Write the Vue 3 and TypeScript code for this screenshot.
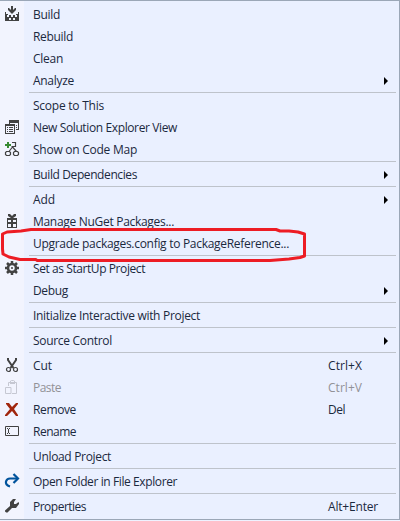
<script setup lang="ts">
import type { Directive } from 'vue'

interface Item {
  label: string
  width: number
  icon?: string
  shortcut?: string
  shortcutWidth?: number
  submenu?: boolean
  disabled?: boolean
}

const groups: Item[][] = [
  [
    { label: 'Build', width: 27, icon: 'build' },
    { label: 'Rebuild', width: 40 },
    { label: 'Clean', width: 30 },
    { label: 'Analyze', width: 41, submenu: true },
  ],
  [
    { label: 'Scope to This', width: 71 },
    { label: 'New Solution Explorer View', width: 144, icon: 'view' },
    { label: 'Show on Code Map', width: 104, icon: 'map' },
  ],
  [{ label: 'Build Dependencies', width: 104, submenu: true }],
  [
    { label: 'Add', width: 22, submenu: true },
    { label: 'Manage NuGet Packages...', width: 141, icon: 'gift' },
    { label: 'Upgrade packages.config to PackageReference...', width: 256 },
  ],
  [
    { label: 'Set as StartUp Project', width: 112, icon: 'gear' },
    { label: 'Debug', width: 35, submenu: true },
  ],
  [{ label: 'Initialize Interactive with Project', width: 167 }],
  [{ label: 'Source Control', width: 79, submenu: true }],
  [
    { label: 'Cut', width: 19, icon: 'cut', shortcut: 'Ctrl+X', shortcutWidth: 34 },
    { label: 'Paste', width: 28, icon: 'paste', shortcut: 'Ctrl+V', shortcutWidth: 34, disabled: true },
    { label: 'Remove', width: 43, icon: 'remove', shortcut: 'Del', shortcutWidth: 17 },
    { label: 'Rename', width: 43, icon: 'rename' },
  ],
  [{ label: 'Unload Project', width: 78 }],
  [{ label: 'Open Folder in File Explorer', width: 144, icon: 'open' }],
  [{ label: 'Properties', width: 53, icon: 'wrench', shortcut: 'Alt+Enter', shortcutWidth: 50 }],
]

const vFit: Directive<HTMLElement, number> = {
  mounted(el, { value }) {
    const natural = el.getBoundingClientRect().width
    const count = el.textContent?.length ?? 1
    el.style.letterSpacing = `${(value - natural) / count}px`
  },
}
</script>

<template>
  <div class="menu" role="menu">
    <div v-for="(group, g) in groups" :key="g" class="group">
      <div v-for="item in group" :key="item.label" class="item" :class="{ disabled: item.disabled }" role="menuitem">
        <span class="icon">
          <svg v-if="item.icon" width="15" height="15" viewBox="0 0 15 15">
            <g v-if="item.icon === 'build'" fill="#424242">
              <path d="M6 -1h2v4l2-2h1v2L7 7 3 3V1h1l2 2z" />
              <path d="M0 5h1v2h2v1h8V7h2V5h1v9H0z" />
              <path d="M2 8h2v2H2zM6 8h2v2H6zM10 8h2v2h-2zM4 11h2v2H4zM8 11h2v2H8z" fill="#f2f4fe" />
            </g>
            <g v-else-if="item.icon === 'view'" fill="#424242">
              <path d="M4 0h10v10h-3V9h2V3H5v1H4z" />
              <path fill-rule="evenodd" d="M0 4h10v10H0zM1 6v7h8V6z" />
              <path d="M2 7h1v1H2zM4 7h4v1H4zM2 9h1v1H2zM4 9h4v1H4zM2 11h1v1H2zM4 11h4v1H4zM11 5h1v1h-1zM11 7h1v1h-1z" />
            </g>
            <g v-else-if="item.icon === 'map'" fill="none" stroke="#424242" stroke-width="1.200">
              <path d="M7 .5h3.500v4H6.500M7.500 5 4 9.500M7.500 5l4 4.500M1.500 9.500h3l1 1v2l-1 1h-3l-1-1v-2zM9.500 9.500h3l1 1v2l-1 1h-3l-1-1v-2z" />
              <path d="M3 0v6M0 3h6" stroke="#388a34" stroke-width="2" />
            </g>
            <g v-else-if="item.icon === 'gift'" fill="#424242">
              <path fill-rule="evenodd" d="M2 4h10v10H2zM3 6v2h3V6zM8 6v2h3V6zM3 10v3h3v-3zM8 10v3h3v-3z" />
              <path d="M3 0h2l2 2 2-2h2v2L8 4H6L3 2z" />
            </g>
            <g v-else-if="item.icon === 'gear'" fill="none" stroke="#424242">
              <circle cx="7" cy="7" r="4" stroke-width="2.600" />
              <path d="M7 0v3M7 11v3M0 7h3M11 7h3M2 2l2 2M10 10l2 2M12 2l-2 2M4 10l-2 2" stroke-width="2.500" />
              <circle cx="7" cy="7" r="1" fill="#424242" stroke="none" />
            </g>
            <g v-else-if="item.icon === 'cut'" fill="none" stroke="#424242">
              <path d="M3 0v2l5.500 8M11 0v2L5.500 10" stroke-width="2" />
              <circle cx="3.500" cy="11.500" r="2" stroke-width="1.200" />
              <circle cx="10.500" cy="11.500" r="2" stroke-width="1.200" />
            </g>
            <g v-else-if="item.icon === 'paste'" fill="none" stroke="#c6c8d2">
              <path d="M3.500 6V2.500h8v11H7M5 3.500h5M5.500 2.500V1l1-.5h2l1 .5v1.500M.5 7.500h5.500v6H.5z" />
            </g>
            <path v-else-if="item.icon === 'remove'" d="M1 1h3l3 4 4-4h2v1L9 7l4 6v1h-2L7 9l-5 5H0v-1l5-6-4-5z" fill="#a1260d" />
            <g v-else-if="item.icon === 'rename'" fill="none" stroke="#424242">
              <path d="M.5 2.500h13v9H.5z" />
              <path d="M2 4.500h1M4 4.500h1M3.500 5v4M2 9.500h1M4 9.500h1" />
            </g>
            <g v-else-if="item.icon === 'open'" fill="none" stroke="#00539c" stroke-width="2.200">
              <path d="M5 12.500C2 11.500.5 9.500 1 7.500 1.500 5.500 3 4.500 5 4.500h7" />
              <path d="M8.500 0 13 4.500 8.500 9" />
            </g>
            <path v-else d="M13.500 3 14 4v1l-3 4H7l-4.500 4.500H1.200L0 12.500V11.500L5 7V3l3-3h3L9 3v2h2z" fill="#424242" />
          </svg>
        </span>
        <span class="label"><span v-fit="item.width">{{ item.label }}</span></span>
        <span v-if="item.shortcut" class="shortcut"><span v-fit="item.shortcutWidth ?? 0">{{ item.shortcut }}</span></span>
        <svg v-if="item.submenu" class="arrow" width="4" height="8" viewBox="0 0 4 8"><path d="M0 0 4 4 0 8z" /></svg>
      </div>
    </div>
    <svg class="highlight" width="310" height="40" viewBox="0 225 310 40" fill="none" stroke="#ed1c24" stroke-width="3" stroke-linejoin="round">
      <path d="M31 229.500H276L280 231H289L298 232 304.500 234V256L300 257.500 289 259 270 260.500H37L36 259.500H20L9 257 3 254 2.500 249V234L7 232 21 231z" />
    </svg>
  </div>
</template>

<style scoped>
.menu {
  position: relative;
  box-sizing: border-box;
  width: 400px;
  height: 520px;
  padding: 3px 0 1px;
  border: solid #9ba7b7;
  border-width: 1px 1px 1px 0;
  background: linear-gradient(to right, #f2f4fe 24px, #eaf0ff 24px);
  color: #1b293e;
  font: 12px/22px "Open Sans", "Noto Sans", sans-serif;
}

.group + .group::before {
  content: "";
  display: block;
  height: 1px;
  margin: 0 3px 2px 29px;
  background: #bec3cb;
}

.item {
  display: flex;
  height: 22px;
  white-space: nowrap;
}

.icon {
  flex: 0 0 28px;
  padding: 3px 0 0 5px;
  box-sizing: border-box;
  margin-right: 5px;
  line-height: 0;
}

.icon svg {
  overflow: visible;
}

.label {
  flex: 0 0 295px;
}

.disabled {
  color: #929297;
}

.arrow {
  margin: 7px 0 0 56px;
  fill: #000;
}

.highlight {
  position: absolute;
  left: 0;
  top: 224px;
}
</style>

<style>
body {
  background: #eef2ff;
}
</style>
